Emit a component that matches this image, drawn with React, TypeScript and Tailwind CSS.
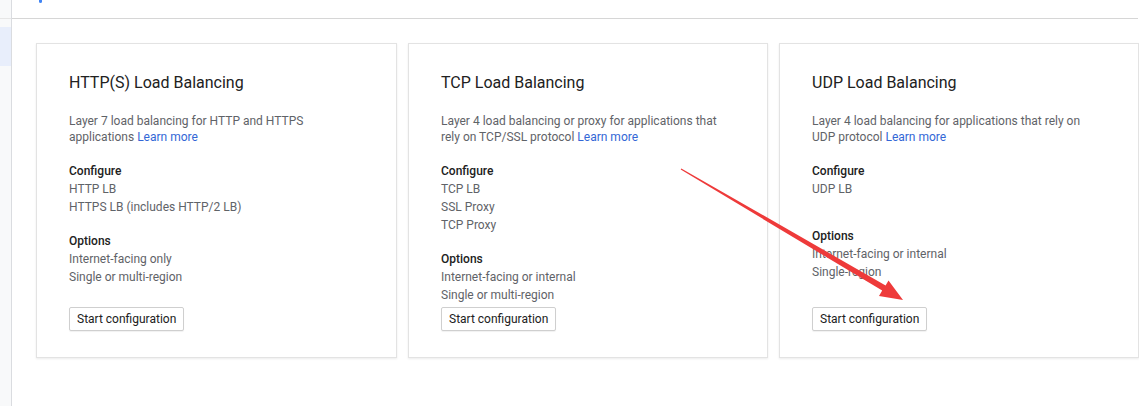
import React from "react";

type Card = {
  title: string;
  desc: string;
  configure: string[];
  options: string[];
  optionsGap: string;
};

const cards: Card[] = [
  {
    title: "HTTP(S) Load Balancing",
    desc: "Layer 7 load balancing for HTTP and HTTPS applications",
    configure: ["HTTP LB", "HTTPS LB (includes HTTP/2 LB)"],
    options: ["Internet-facing only", "Single or multi-region"],
    optionsGap: "mt-4",
  },
  {
    title: "TCP Load Balancing",
    desc: "Layer 4 load balancing or proxy for applications that rely on TCP/SSL protocol",
    configure: ["TCP LB", "SSL Proxy", "TCP Proxy"],
    options: ["Internet-facing or internal", "Single or multi-region"],
    optionsGap: "mt-4",
  },
  {
    title: "UDP Load Balancing",
    desc: "Layer 4 load balancing for applications that rely on UDP protocol",
    configure: ["UDP LB"],
    options: ["Internet-facing or internal", "Single-region"],
    optionsGap: "mt-[29px]",
  },
];

const LbCard = ({ card }: { card: Card }) => {
  return (
    <div className="flex flex-col h-[315px] bg-white border border-[#e3e3e3] shadow-[0_1px_2px_rgba(0,0,0,0.08)] pt-[27px] pb-[26px] pl-[32px] pr-6">
      <h2 className="text-[16px] leading-6 text-[#212121]">{card.title}</h2>
      <p className="mt-[18px] text-[12px] leading-4 text-[#5f6368] max-w-[285px]">
        {card.desc} <a href="#" className="text-[#3367d6]">Learn more</a>
      </p>
      <div className="mt-[17px] text-[12px] leading-[18px]">
        <div className="font-medium text-[#212121]">Configure</div>
        {card.configure.map((c) => (
          <div key={c} className="text-[#5f6368]">
            {c}
          </div>
        ))}
      </div>
      <div className={`${card.optionsGap} text-[12px] leading-[18px]`}>
        <div className="font-medium text-[#212121]">Options</div>
        {card.options.map((o) => (
          <div key={o} className="text-[#5f6368]">
            {o}
          </div>
        ))}
      </div>
      <div className="mt-auto">
        <button className="h-6 px-[7px] text-[12px] leading-[22px] text-[#212121] bg-white border border-[#cfcfcf] rounded-[2px] shadow-[0_1px_1px_rgba(0,0,0,0.06)]">
          Start configuration
        </button>
      </div>
    </div>
  );
};

export default function App() {
  return (
    <div
      className="relative flex w-[1139px] h-[406px] bg-white overflow-hidden"
      style={{ fontFamily: "Roboto, 'Liberation Sans', sans-serif" }}
    >
      {/* Sidebar strip */}
      <div className="w-[12px] shrink-0 bg-[#f8f9fa] border-r border-[#dadce0] flex flex-col">
        <div className="h-[19px] border-b border-[#e6e6e6]" />
        <div className="mt-[8px] h-[39px] bg-[#e8eefb]" />
      </div>

      {/* Main */}
      <div className="flex-1 flex flex-col">
        <div className="h-[19px] border-b border-[#d6d6d6] mr-[1px] relative">
          <div className="absolute left-[27px] top-0 w-[3px] h-[3px] rounded-b-full bg-[#4285f4]" />
        </div>
        <div className="pl-[24px] pt-[24px] grid grid-cols-[361px_360px_360px] gap-[11px]">
          {cards.map((c) => (
            <LbCard key={c.title} card={c} />
          ))}
        </div>
      </div>

      {/* Annotation arrow */}
      <svg
        className="absolute left-0 top-0 pointer-events-none"
        width="1139"
        height="406"
        viewBox="0 0 1139 406"
      >
        <polygon
          points="680.7,169.6 882.2,290.6 879,296 903,300 888.5,280.5 885.6,285.4 681.3,168.4"
          fill="#ee3a3a"
        />
      </svg>
    </div>
  );
}
